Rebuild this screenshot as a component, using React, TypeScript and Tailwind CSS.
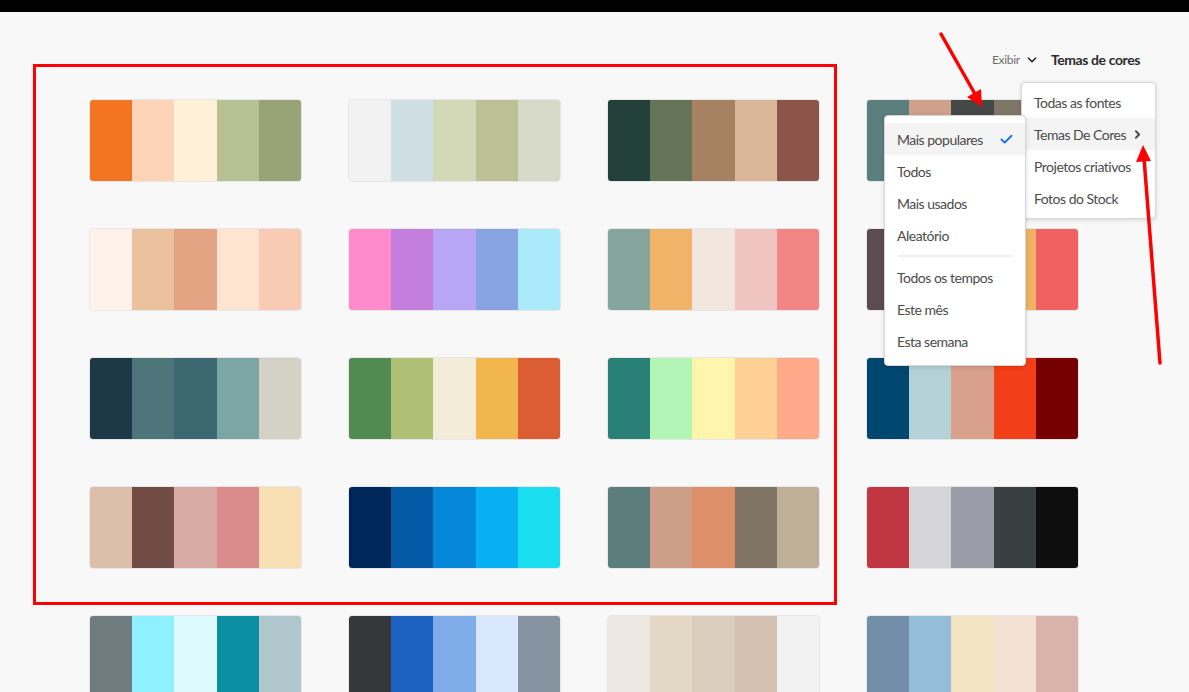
import { Check, ChevronDown, ChevronRight } from "lucide-react";

const palettes: string[][] = [
  ["#f47521", "#fed4b9", "#fff0d8", "#b8c194", "#98a376"],
  ["#f2f2f2", "#cfdee2", "#d3d9b6", "#bbc194", "#d7dac8"],
  ["#223f39", "#657356", "#a68262", "#dbb79a", "#8d5449"],
  ["#5b7f7d", "#cfa18a", "#454847", "#7e7767", "#8a8f8c"],

  ["#fff2ea", "#ecc19e", "#e3a483", "#ffe5d1", "#f9cbb4"],
  ["#fe8bcc", "#c47fdc", "#b6a6f5", "#87a3e2", "#abeafa"],
  ["#86a59c", "#f0b368", "#f2e7de", "#f0c4c0", "#f28684"],
  ["#5c4b51", "#8c6f6e", "#d99a78", "#f0b363", "#f06262"],

  ["#1d3947", "#4c7479", "#3e6871", "#7ba6a5", "#d4d2c5"],
  ["#528b51", "#b0bf76", "#f2ecd8", "#f1b74e", "#da5e32"],
  ["#298076", "#b2f5b7", "#fff5ac", "#fed095", "#ffa98b"],
  ["#00476f", "#b4d1d8", "#d9a08c", "#f33e1a", "#740001"],

  ["#dcbfab", "#724b46", "#d7aaa4", "#d98b8b", "#f8dfb3"],
  ["#00275a", "#0459a5", "#0587d9", "#07b0f0", "#1adef0"],
  ["#5b7d7b", "#cd9f87", "#dc8f68", "#807565", "#beb098"],
  ["#c03642", "#d5d5d7", "#9a9ba6", "#383f40", "#0e0e0e"],

  ["#6e7c80", "#8ff0ff", "#dcfaff", "#0a8fa3", "#b0c8cd"],
  ["#363738", "#1d62c0", "#80adea", "#dae8fd", "#8693a1"],
  ["#ede9e2", "#e3d8c4", "#dacdbe", "#d4c1b2", "#f2f2f2"],
  ["#728ea8", "#93bdd8", "#f2e4c1", "#f2e1d3", "#d9b2aa"],
];

function Palette({ colors }: { colors: string[] }) {
  return (
    <div className="flex h-[83px] w-[213px] overflow-hidden rounded-[4px] border border-[#e6e6e6]">
      {colors.map((c, i) => (
        <div key={i} className="flex-1" style={{ backgroundColor: c }} />
      ))}
    </div>
  );
}

function MenuItem({ label, active, right }: { label: string; active?: boolean; right?: React.ReactNode }) {
  return (
    <div
      className={
        "flex h-[32px] items-center justify-between whitespace-nowrap pl-[12px] pr-[11px] text-[14px] tracking-[-0.5px] text-[#4b4b4b] " +
        (active ? "bg-[#f4f4f4]" : "")
      }
    >
      <span>{label}</span>
      {right}
    </div>
  );
}

export default function App() {
  return (
    <div className="relative h-screen w-full overflow-hidden bg-[#f8f8f8] font-['Lato',sans-serif]">
      <div className="h-[12px] bg-black" />

      <div className="flex h-[87px] items-center justify-end pr-[49px] pt-[8px]">
        <span className="text-[12px] tracking-[-0.3px] text-[#6e6e6e]">Exibir</span>
        <ChevronDown className="ml-[5px] h-[14px] w-[14px] text-[#2c2c2c]" strokeWidth={3} />
        <span className="ml-[12px] text-[14px] font-bold tracking-[-0.4px] text-[#2c2c2c]">Temas de cores</span>
      </div>

      <div className="grid grid-cols-[repeat(4,213px)] gap-x-[46px] gap-y-[46px] pl-[89px]">
        {palettes.map((p, i) => (
          <Palette key={i} colors={p} />
        ))}
      </div>

      {/* annotation box */}
      <div className="pointer-events-none absolute left-[33px] top-[64px] h-[541px] w-[804px] border-[3px] border-[#ff0000]" />

      {/* main menu */}
      <div className="absolute left-[1021px] top-[82px] w-[135px] rounded-[4px] border border-[#d6d6d6] bg-white pb-[4px] pt-[3px] shadow-[0_1px_4px_rgba(0,0,0,0.15)]">
        <MenuItem label="Todas as fontes" />
        <MenuItem
          label="Temas De Cores"
          active
          right={<ChevronRight className="h-[13px] w-[13px] text-[#4b4b4b]" strokeWidth={3.5} />}
        />
        <MenuItem label="Projetos criativos" />
        <MenuItem label="Fotos do Stock" />
      </div>

      {/* sub menu */}
      <div className="absolute left-[884px] top-[115px] w-[142px] rounded-[4px] border border-[#d6d6d6] bg-white pb-[8px] pt-[7px] shadow-[0_1px_4px_rgba(0,0,0,0.15)]">
        <MenuItem
          label="Mais populares"
          active
          right={<Check className="h-[15px] w-[15px] text-[#1473e6]" strokeWidth={3} />}
        />
        <MenuItem label="Todos" />
        <MenuItem label="Mais usados" />
        <MenuItem label="Aleatório" />
        <div className="mx-[13px] my-[4px] h-[2px] bg-[#efefef]" />
        <MenuItem label="Todos os tempos" />
        <MenuItem label="Este mês" />
        <MenuItem label="Esta semana" />
      </div>

      {/* annotation arrows */}
      <svg className="pointer-events-none absolute left-0 top-0" width="1189" height="692">
        <line x1="941" y1="34" x2="975" y2="94" stroke="#ff0000" strokeWidth="3.5" strokeLinecap="round" />
        <polygon points="982,107 967,97 981,89" fill="#ff0000" />
        <line x1="1160" y1="363" x2="1144" y2="158" stroke="#ff0000" strokeWidth="3.5" strokeLinecap="round" />
        <polygon points="1143,145 1136,162 1151,161" fill="#ff0000" />
      </svg>
    </div>
  );
}
